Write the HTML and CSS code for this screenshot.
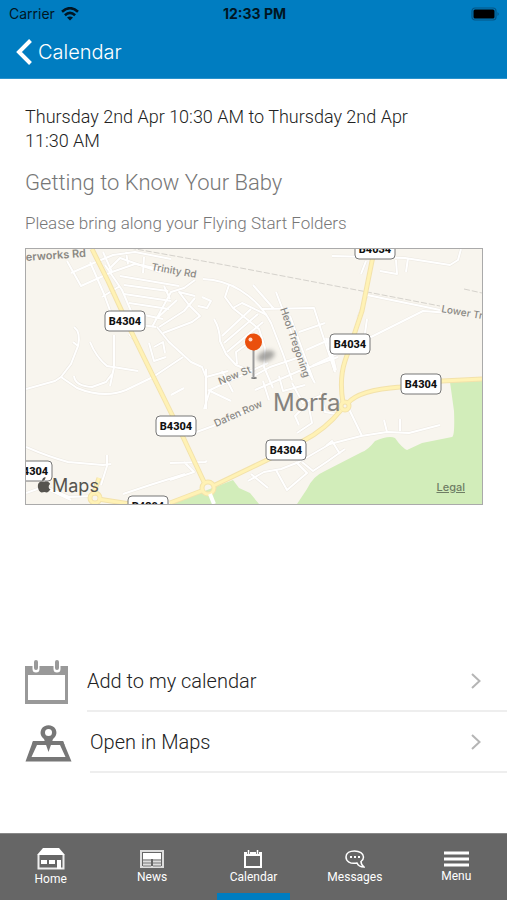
FILE: index.html
```html
<!DOCTYPE html>
<html lang="en">
<head>
    <meta charset="UTF-8">
    <meta name="viewport" content="width=device-width, initial-scale=1.0">
    <title>Calendar</title>
    <link rel="stylesheet" href="styles.css">
</head>
<body>
    <header class="header">
        <div class="status-bar">
            <div class="carrier">
                <span>Carrier</span>
                <svg width="18" height="14" viewBox="0 0 18 14" fill="none" stroke="#001623" stroke-width="2.6">
                    <path d="M1 4.8Q9-2.4 17 4.8"/>
                    <path d="M3.900 8.200Q9 3.600 14.100 8.200"/>
                    <path d="M9 13.500L6 10.600Q9 8.200 12 10.600Z" fill="#001623" stroke="none"/>
                </svg>
            </div>
            <div class="time">12:33 PM</div>
            <div class="battery">
                <svg width="29" height="14" viewBox="0 0 29 14">
                    <rect x="1" y="1" width="24" height="12" rx="3" fill="none" stroke="#045686" stroke-width="1.2"/>
                    <rect x="2.5" y="2.5" width="21" height="9" rx="1.5" fill="#000"/>
                    <path d="M26.5 5Q29 7 26.5 9Z" fill="#045686"/>
                </svg>
            </div>
        </div>
        <a class="back" href="#">
            <svg width="16" height="26" viewBox="0 0 16 26" fill="none" stroke="#fff" stroke-width="4">
                <path d="M14.5 1.5L3 13L14.5 24.5"/>
            </svg>
            <span>Calendar</span>
        </a>
    </header>

    <main class="content">
        <section class="event">
            <p class="event-date">Thursday 2nd Apr 10:30 AM to Thursday 2nd Apr 11:30 AM</p>
            <h1 class="event-title">Getting to Know Your Baby</h1>
            <p class="event-note">Please bring along your Flying Start Folders</p>

            <div class="map">
                <svg class="map-canvas" viewBox="0 0 456 255">
                    <defs>
                        <g id="streets">
                            <path d="M0 140L29 132L35 128L51 139Q78 150 100 141L127 128L145 116L157 108"/>
                            <path d="M35 128L45 115L52 97L47 93M52 97Q55 83 48 78M64 93Q70 108 81 117L112 122"/>
                            <path d="M88 86V118L84 137M48 127Q49 137 66 138L80 133L86 125"/>
                            <path d="M41 12L55 37L86 23L77 3M45 24L70 13M64 13L78 45L86 67M79 16L96 41L108 69M76 48L94 37M86 23L109 15L145 22"/>
                            <path d="M70 13L87 6L109 3L145 10M83 20L94 9L134 23M100 3L102 15M118 8L117 24M98 45L145 52M98 36L142 42M94 27L153 37M103 54L143 60M104 63L137 70M108 75L130 78"/>
                            <path d="M126 78L145 43L158 39L169 31M129 71L151 51M133 78L158 62L169 49M137 84L166 73L174 67L163 56L153 43L169 47M138 37L144 50"/>
                            <path d="M131 78L143 93L154 103L165 113L176 118L180 128L202 122"/>
                            <path d="M123 94L128 112L140 108M128 98L137 93L139 104M103 85L112 94M172 57L181 59L185 52L176 48"/>
                            <path d="M177 30Q198 31 214 41Q235 54 245 74L257 105L266 131"/>
                            <path d="M203 36L199 48L207 59L233 80L239 99L238 118L247 139"/>
                            <path d="M207 59L216 54L241 66M188 70Q194 80 194 92L200 105L210 116L229 124"/>
                            <path d="M196 87L225 60M198 94L232 65M201 103L237 73M211 115L210 103L224 93"/>
                            <path d="M227 36L248 60M250 43L276 111L289 134M236 60L288 59L296 84L309 123M264 67L288 133"/>
                            <path d="M273 83L299 74M280 101L305 90M286 117L315 103L343 89L397 62L424 64M300 89L309 123"/>
                            <path d="M226 128L244 118L277 107M229 141L273 122L312 108M178 160L184 141L242 114M180 120V160M182 141L205 152M196 122L207 143"/>
                            <path d="M237 132L243 151M253 127L257 142L279 136M266 134L277 154L299 145M278 158L269 167L273 176M282 154L286 174L271 184M295 143L299 163L310 165"/>
                            <path d="M145 146L158 139M0 198Q23 208 42 213L77 216L85 215M81 206V217L75 236M144 214L179 213L181 212M144 231L168 223L158 213"/>
                            <path d="M97 245L124 236L159 225M157 188L187 177L224 160"/>
                            <path d="M222 232L238 223L255 220L273 213L304 195L335 187L361 183L383 184L414 176M322 158L336 187"/>
                            <path d="M361 183L358 171M374 182V170M300 197L306 192L314 205M250 221L261 241L281 224L270 213M276 213L287 222L302 212L319 200M225 225L242 239"/>
                            <path d="M306 7L347 8L379 9L424 16L432 11L435 0M382 9L380 23M370 11L371 25L354 22M340 12L335 25M341 46L332 69M341 46L395 57L414 61M341 70L338 91M302 89L310 121"/>
                            <path d="M0 244L17 238L45 251M20 238L43 248L67 247"/>
                        </g>
                        <g id="roads">
                            <path d="M66 0L82 32L104 80L127 127L157 188L178 233"/>
                            <path d="M187 237L239 212L277 192Q300 180 315 161"/>
                            <path d="M322 154Q333 141 374 138L416 132L456 130"/>
                            <path d="M349 0L346 12L336 62L328 86L319 112Q313 130 317 154"/>
                            <path d="M178 241L144 254M67 246L73 229M72 250L104 255"/>
                            <circle cx="182" cy="239" r="6"/>
                            <circle cx="319" cy="157" r="4"/>
                            <circle cx="69" cy="249" r="5"/>
                        </g>
                    </defs>

                    <rect width="456" height="255" fill="#f8f5ee"/>

                    <!-- parks -->
                    <path class="park" d="M424 133L428 162Q429 187 426 188L396 194L381 201Q376 199 369 189Q363 186 349 192Q342 201 336 203L299 222Q287 227 281 240L271 255H456V131Z"/>
                    <path class="park" d="M145 255L176 243L207 231L213 239L224 244L233 255Z"/>

                    <!-- railway -->
                    <path class="rail" d="M104 -1L199 16L299 35L336 42L414 57M438 40L456 44"/>

                    <!-- streets and main roads, casing first -->
                    <use href="#streets" class="street-edge"/>
                    <use href="#streets" class="street"/>
                    <use href="#roads" class="road-edge"/>
                    <use href="#roads" class="road"/>
                    <path d="M184 245L188 255" fill="none" stroke="#fff" stroke-width="4"/>

                    <!-- street names -->
                    <g class="street-name">
                        <text x="0" y="12" class="strong" transform="rotate(-4 0 12)">erworks Rd</text>
                        <text x="125" y="21" transform="rotate(10 125 21)">Trinity Rd</text>
                        <text x="415" y="63" transform="rotate(10 415 63)">Lower Trostre Rd</text>
                        <text x="254" y="60" transform="rotate(71 254 60)">Heol Tregoning</text>
                        <text x="194" y="136" transform="rotate(-22 194 136)">New St</text>
                        <text x="190" y="178" transform="rotate(-24 190 178)">Dafen Row</text>
                    </g>
                    <text class="town" x="247" y="162">Morfa</text>

                    <!-- road numbers -->
                    <g class="shield">
                        <rect x="79" y="62" width="40" height="20" rx="4"/><text x="99" y="76">B4304</text>
                        <rect x="329" y="-10" width="40" height="20" rx="4"/><text x="349" y="4">B4034</text>
                        <rect x="304" y="85" width="40" height="20" rx="4"/><text x="324" y="99">B4034</text>
                        <rect x="375" y="125" width="40" height="20" rx="4"/><text x="395" y="139">B4304</text>
                        <rect x="130" y="167" width="40" height="20" rx="4"/><text x="150" y="181">B4304</text>
                        <rect x="240" y="191" width="40" height="20" rx="4"/><text x="260" y="205">B4304</text>
                        <rect x="-14" y="212" width="40" height="20" rx="4"/><text x="6" y="226">B4304</text>
                        <rect x="102" y="247" width="40" height="20" rx="4"/><text x="122" y="261">B4304</text>
                    </g>

                    <!-- pin -->
                    <ellipse class="pin-shadow" cx="240" cy="107" rx="9" ry="5" transform="rotate(-20 240 107)"/>
                    <ellipse cx="228" cy="129" rx="3" ry="1" fill="#777"/>
                    <path d="M227.5 100V129" stroke="#9b9b9b" stroke-width="2"/>
                    <circle cx="227.5" cy="93" r="8.5" fill="#ea4f0c"/>
                    <circle cx="224.5" cy="90.5" r="2" fill="#ffd9c8"/>

                    <!-- maps mark -->
                    <path fill="#56544f" d="M19.5 228C17.5 228.200 15.900 230 16.200 232C18.300 231.900 19.700 230 19.500 228ZM24.500 240.500C22.200 239.400 22.200 236 24.200 234.900C22.500 232.200 19.900 232.300 18.300 233C17.300 233.100 16 232.100 14.300 232.700C10.800 233.800 11.400 240 14.100 242.800C15.700 244.400 16.900 243 18.300 243C19.700 243 20.800 244.400 22.300 242.800Z"/>
                    <text class="maps-mark" x="26" y="243">Maps</text>
                </svg>
                <a class="legal" href="#">Legal</a>
            </div>
        </section>

        <nav class="actions">
            <a class="action" href="#">
                <svg width="44" height="44" viewBox="0 0 44 44">
                    <path d="M0 6H43V44H0ZM3 15V40H40V15Z" fill="#999" fill-rule="evenodd"/>
                    <path d="M11 3V9M32 3V9" stroke="#fff" stroke-width="7" stroke-linecap="round"/>
                    <path d="M11 2V8M32 2V8" stroke="#999" stroke-width="4" stroke-linecap="round"/>
                </svg>
                <span class="action-label">
                    Add to my calendar
                    <svg width="10" height="16" viewBox="0 0 10 16" fill="none" stroke="#b5b5b5" stroke-width="2"><path d="M1 1L8.5 8L1 15"/></svg>
                </span>
            </a>
            <a class="action" href="#">
                <svg width="47" height="38" viewBox="0 0 47 38">
                    <path d="M8 17H38L46.500 37.500H.5ZM12 21L6.500 33H40.500L35 21Z" fill="#777" fill-rule="evenodd"/>
                    <path d="M23.5 30L16 16H31Z" fill="#fff"/>
                    <path d="M8 17H38L39.500 21H7Z" fill="#777"/>
                    <path d="M23.5 28L19 15C15 12 15 8 16.500 5C19.500 0 27.500 0 30.500 5C32 8 32 12 28 15Z" fill="#777"/>
                    <circle cx="23.5" cy="8.5" r="3.5" fill="#fff"/>
                </svg>
                <span class="action-label">
                    Open in Maps
                    <svg width="10" height="16" viewBox="0 0 10 16" fill="none" stroke="#b5b5b5" stroke-width="2"><path d="M1 1L8.5 8L1 15"/></svg>
                </span>
            </a>
        </nav>
    </main>

    <nav class="tabs">
        <a class="tab" href="#">
            <svg width="28" height="22" viewBox="0 0 28 22">
                <path d="M6 0H22L28 7H0Z" fill="#fff"/>
                <path d="M1.5 7V20.500H26.500V7" fill="none" stroke="#eee" stroke-width="2"/>
                <path d="M4 12H10V16H4ZM12 12H18V16H12ZM20 12H24V21H20Z" fill="#fff"/>
            </svg>
            <span>Home</span>
        </a>
        <a class="tab" href="#">
            <svg width="24" height="18" viewBox="0 0 24 18">
                <rect x="1" y="1" width="22" height="16" fill="none" stroke="#ddd" stroke-width="2"/>
                <path d="M3 3H21V9H3Z" fill="#fff"/>
                <path d="M3 9H11V17H3ZM13 9H21V17H13Z" fill="#aaa"/>
                <path d="M3 11.5H11M3 14.500H11M13 11.500H21M13 14.500H21" stroke="#ddd" stroke-width="1"/>
            </svg>
            <span>News</span>
        </a>
        <a class="tab active" href="#">
            <svg width="18" height="18" viewBox="0 0 18 18">
                <path d="M0 2H18V18H0ZM2 6V16H16V6Z" fill="#fff" fill-rule="evenodd"/>
                <path d="M4.5 0V4M13.500 0V4" stroke="#666" stroke-width="3"/>
                <path d="M4.5 0V4M13.500 0V4" stroke="#fff" stroke-width="1.5"/>
            </svg>
            <span>Calendar</span>
        </a>
        <a class="tab" href="#">
            <svg width="20" height="18" viewBox="0 0 20 18">
                <path d="M12 13C5 14.500 1 11 1 7C1 3 5 1 9.500 1C14.500 1 18.500 3.500 18.500 7C18.500 9 17.500 10.500 16 11.500C16 13.500 17 15.500 19 17C16 17 13 15.500 12 13Z" fill="none" stroke="#fff" stroke-width="1.5"/>
                <path d="M5 7H7M9 7H11M13 7H15" stroke="#fff" stroke-width="2"/>
            </svg>
            <span>Messages</span>
        </a>
        <a class="tab" href="#">
            <svg width="25" height="16" viewBox="0 0 25 16">
                <path d="M0 2H25M0 8H25M0 14H25" stroke="#fff" stroke-width="3"/>
            </svg>
            <span>Menu</span>
        </a>
    </nav>
</body>
</html>
```
FILE: styles.css
```css
* {
    box-sizing: border-box;
}
body {
    display: flex;
    flex-direction: column;
    min-height: 100vh;
    margin: 0;
    background-color: #fff;
    color: #222;
    font-family: Roboto, sans-serif;
    font-weight: 300;
}
a {
    color: inherit;
    text-decoration: none;
}
svg {
    display: block;
    flex: none;
}

/* Header */
.header {
    padding-bottom: 11px;
    background-color: #007dc1;
    border-bottom: 1px solid #2a93cd;
}
.status-bar {
    display: grid;
    grid-template-columns: 1fr auto 1fr;
    align-items: center;
    height: 27px;
    padding: 0 7px 0 9px;
    color: #001623;
    font: 400 14px/20px Inter, sans-serif;
}
.carrier {
    display: flex;
    align-items: center;
    gap: 6px;
}
.time {
    font-weight: 700;
}
.battery {
    justify-self: end;
}
.back {
    display: flex;
    align-items: center;
    gap: 6px;
    height: 40px;
    padding: 10px 0 0 16px;
    color: #fff;
    font: 300 20px/30px Inter, sans-serif;
}

/* Event details */
.content {
    display: flex;
    flex: 1;
    flex-direction: column;
}
.event {
    padding: 26px 24px 0 25px;
}
.event-date {
    margin: 0;
    padding-right: 36px;
    font-size: 18px;
    line-height: 24px;
}
.event-title {
    margin: 16px 0 14px;
    color: #777;
    font-size: 22px;
    font-weight: 300;
    line-height: 28px;
}
.event-note {
    margin: 0 0 13px;
    color: #777;
    font-size: 17px;
    line-height: 24px;
}

/* Map */
.map {
    position: relative;
    border: 1px solid #aaa;
}
.map-canvas {
    width: 100%;
    height: auto;
}
.park {
    fill: #d2edba;
}
.rail {
    fill: none;
    stroke: #d5d2cc;
    stroke-width: 1;
    stroke-dasharray: 6 2;
}
.street-edge,
.street,
.road-edge,
.road {
    fill: none;
    stroke-linejoin: round;
}
.street-edge {
    stroke: #ece8e1;
    stroke-width: 3;
}
.street {
    stroke: #fff;
    stroke-width: 2;
}
.road-edge {
    stroke: #f3e2ab;
    stroke-width: 5;
}
.road {
    stroke: #fff2b5;
    stroke-width: 3;
}
.street-name {
    fill: #8a8883;
    font: 500 10px Inter, sans-serif;
}
.street-name .strong {
    font-size: 11px;
    font-weight: 600;
}
.town {
    fill: #85827d;
    font: 400 24px Inter, sans-serif;
}
.shield rect {
    fill: #fff;
    stroke: #777;
    stroke-width: 1;
}
.shield text {
    fill: #111;
    font: 800 11px Roboto, sans-serif;
    text-anchor: middle;
}
.pin-shadow {
    fill: #555;
    opacity: 0.5;
    filter: blur(2px);
}
.maps-mark {
    fill: #56544f;
    font: 400 18px Inter, sans-serif;
}
.legal {
    position: absolute;
    right: 17px;
    bottom: 10px;
    color: #6f7d65;
    font: 500 11px/14px Inter, sans-serif;
    text-decoration: underline;
}

/* Actions */
.actions {
    margin: auto 0 60px;
}
.action {
    display: flex;
    align-items: center;
    gap: 18px;
    padding-left: 25px;
    font-size: 20px;
}
.action-label {
    display: flex;
    flex: 1;
    align-items: center;
    justify-content: space-between;
    height: 61px;
    padding-right: 26px;
    border-bottom: 2px solid #eee;
}

/* Tab bar */
.tabs {
    display: grid;
    grid-template-columns: repeat(5, 1fr);
    height: 67px;
    background-color: #666;
    border-top: 1px solid #888;
}
.tab {
    position: relative;
    display: flex;
    flex-direction: column;
    align-items: center;
    justify-content: center;
    gap: 2px;
    color: #fff;
    font-size: 12px;
    font-weight: 400;
    line-height: 14px;
}
.active::after {
    content: "";
    position: absolute;
    bottom: 0;
    left: 14%;
    right: 14%;
    height: 7px;
    background-color: #007dc1;
}
```
